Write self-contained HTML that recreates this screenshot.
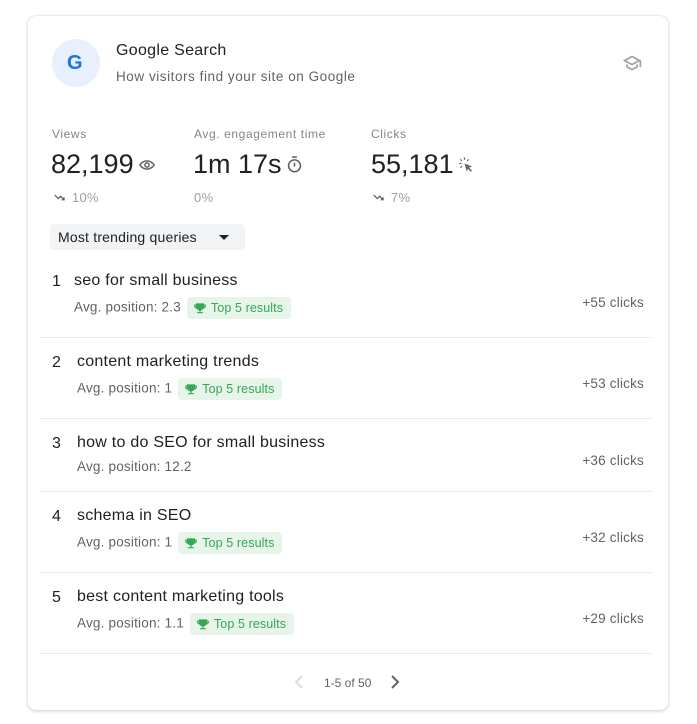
<!DOCTYPE html><html><head><style>
body{margin:0;background:#fff;font-family:"Liberation Sans",sans-serif;width:697px;height:724px;position:relative;overflow:hidden}
.card{position:absolute;left:28px;top:16px;width:640px;height:694px;border-radius:8px;box-shadow:0 1px 4px rgba(0,0,0,.18),0 0 1px rgba(0,0,0,.2);background:#fff}
.a{position:absolute;white-space:nowrap}
.lbl{font-size:12px;color:#80868b;letter-spacing:.6px}
.big{font-size:27px;color:#202124;display:flex;align-items:center}
.big svg{margin-left:3px}
.dl{font-size:13px;color:#9aa0a6;display:flex;align-items:center;letter-spacing:.3px}
.t{font-size:16px;color:#202124;letter-spacing:.25px}
.n{font-size:16px;color:#202124}
.s{font-size:13.5px;color:#5f6368;letter-spacing:.2px}
.c{font-size:13.5px;color:#5f6368;right:53px;letter-spacing:.2px}
.badge{display:inline-flex;align-items:center;background:#e6f4ea;color:#34a853;font-size:12.5px;padding:4px 8px 4px 6px;border-radius:4px;margin-left:6px;vertical-align:middle;letter-spacing:.1px}
.badge svg{margin-right:4px}
.hr{position:absolute;left:40px;width:612px;height:1px;background:#e8eaed}
</style></head><body>
<svg width="0" height="0" style="position:absolute"><defs><symbol id="tr" viewBox="0 0 24 24"><path d="M5 4h14v2h3v3a4 4 0 01-4 4h-.5A5.5 5.5 0 0113 16v3h4v2H7v-2h4v-3a5.5 5.5 0 01-4.5-3H6a4 4 0 01-4-4V6h3V4zm0 4H4v1a2 2 0 001 1.7V8zm14 0v2.7A2 2 0 0020 9V8h-1z" fill="#34a853"/></symbol>
<symbol id="dn" viewBox="0 0 24 24"><path d="M3 7l6 6 4-4 6 6M19 11v4h-4" stroke="#5f6368" stroke-width="2.2" fill="none"/></symbol></defs></svg>
<div class="card"></div>
<div class="a" style="left:52px;top:39px;width:48px;height:48px;border-radius:50%;background:#e8f0fe"></div>
<div class="a" style="left:67px;top:52px;font-size:20px;font-weight:bold;color:#1a73e8">G</div>
<div class="a" style="left:116px;top:42px;font-size:16px;color:#202124;letter-spacing:.3px">Google Search</div>
<div class="a" style="left:116px;top:69px;font-size:13.5px;color:#5f6368;letter-spacing:.55px">How visitors find your site on Google</div>
<svg class="a" style="left:621px;top:53px" width="22" height="20" viewBox="0 0 24 24"><path d="M12 3L1 9l11 6 9-4.9V17h2V9L12 3zm0 2.3L18.8 9 12 12.7 5.2 9 12 5.3zM5 13.2v4L12 21l7-3.8v-4l-2 1.1v1.7l-5 2.7-5-2.7v-1.7L5 13.2z" fill="#9aa0a6"/></svg>
<div class="a lbl" style="left:52px;top:127px">Views</div>
<div class="a lbl" style="left:194px;top:127px">Avg. engagement time</div>
<div class="a lbl" style="left:371px;top:127px">Clicks</div>
<div class="a big" style="left:51px;top:149px">82,199<svg width="20" height="18" viewBox="0 0 24 24"><path d="M12 6.5c-4.5 0-8 3-9.5 5.5 1.5 2.5 5 5.5 9.5 5.5s8-3 9.5-5.5C20 9.5 16.5 6.5 12 6.5z" stroke="#5f6368" stroke-width="2" fill="none"/><circle cx="12" cy="12" r="2.8" stroke="#5f6368" stroke-width="2" fill="none"/></svg></div>
<div class="a big" style="left:193px;top:149px">1m 17s<svg width="19" height="20" viewBox="0 0 24 24"><path d="M9 1h6v2H9z" fill="#5f6368"/><circle cx="12" cy="13" r="7.5" stroke="#5f6368" stroke-width="2" fill="none"/><path d="M11 9h2v5h-2z" fill="#5f6368"/></svg></div>
<div class="a big" style="left:371px;top:149px">55,181<svg width="18" height="18" viewBox="0 0 24 24"><path d="M10 10l10 4-4 1.5 4 4-1.5 1.5-4-4L13 21z" fill="#5f6368"/><path d="M3 10h3M10 2v3M4.5 4.5l2 2M15.5 4.5l-2 2M4.5 15.5l2-2" stroke="#5f6368" stroke-width="1.6"/></svg></div>
<div class="a dl" style="left:52px;top:190px"><svg width="16" height="14" viewBox="0 0 24 24"><use href="#dn"/></svg>&nbsp;10%</div>
<div class="a dl" style="left:194px;top:190px">0%</div>
<div class="a dl" style="left:371px;top:190px"><svg width="16" height="14" viewBox="0 0 24 24"><use href="#dn"/></svg>&nbsp;7%</div>
<div class="a" style="left:50px;top:224px;width:195px;height:26px;background:#f1f3f4;border-radius:4px"></div>
<div class="a" style="left:58px;top:229px;font-size:14px;color:#202124;letter-spacing:.2px">Most trending queries</div>
<div class="a" style="left:219px;top:235px;width:0;height:0;border-left:5px solid transparent;border-right:5px solid transparent;border-top:5px solid #202124"></div>

<div class="a n" style="left:52px;top:273px">1</div><div class="a t" style="left:74px;top:272px">seo for small business</div>
<div class="a s" style="left:74px;top:297px">Avg. position: 2.3<span class="badge"><svg width="14" height="14"><use href="#tr"/></svg>Top 5 results</span></div>
<div class="a c" style="top:295px">+55 clicks</div>
<div class="hr" style="top:337px"></div>
<div class="a n" style="left:52px;top:354px">2</div><div class="a t" style="left:77px;top:353px">content marketing trends</div>
<div class="a s" style="left:77px;top:378px">Avg. position: 1<span class="badge"><svg width="14" height="14"><use href="#tr"/></svg>Top 5 results</span></div>
<div class="a c" style="top:376px">+53 clicks</div>
<div class="hr" style="top:418px"></div>
<div class="a n" style="left:52px;top:435px">3</div><div class="a t" style="left:77px;top:434px">how to do SEO for small business</div>
<div class="a s" style="left:77px;top:459px">Avg. position: 12.2</div>
<div class="a c" style="top:453px">+36 clicks</div>
<div class="hr" style="top:491px"></div>
<div class="a n" style="left:52px;top:508px">4</div><div class="a t" style="left:77px;top:507px">schema in SEO</div>
<div class="a s" style="left:77px;top:532px">Avg. position: 1<span class="badge"><svg width="14" height="14"><use href="#tr"/></svg>Top 5 results</span></div>
<div class="a c" style="top:530px">+32 clicks</div>
<div class="hr" style="top:572px"></div>
<div class="a n" style="left:52px;top:589px">5</div><div class="a t" style="left:77px;top:588px">best content marketing tools</div>
<div class="a s" style="left:77px;top:613px">Avg. position: 1.1<span class="badge"><svg width="14" height="14"><use href="#tr"/></svg>Top 5 results</span></div>
<div class="a c" style="top:611px">+29 clicks</div>
<div class="hr" style="top:653px"></div>
<svg class="a" style="left:292px;top:674px" width="14" height="16" viewBox="0 0 14 16"><path d="M10 2L4 8l6 6" stroke="#dadce0" stroke-width="2" fill="none"/></svg>
<div class="a" style="left:324px;top:676px;font-size:12px;color:#5f6368">1-5 of 50</div>
<svg class="a" style="left:388px;top:674px" width="14" height="16" viewBox="0 0 14 16"><path d="M4 2l6 6-6 6" stroke="#5f6368" stroke-width="2" fill="none"/></svg>
</body></html>
